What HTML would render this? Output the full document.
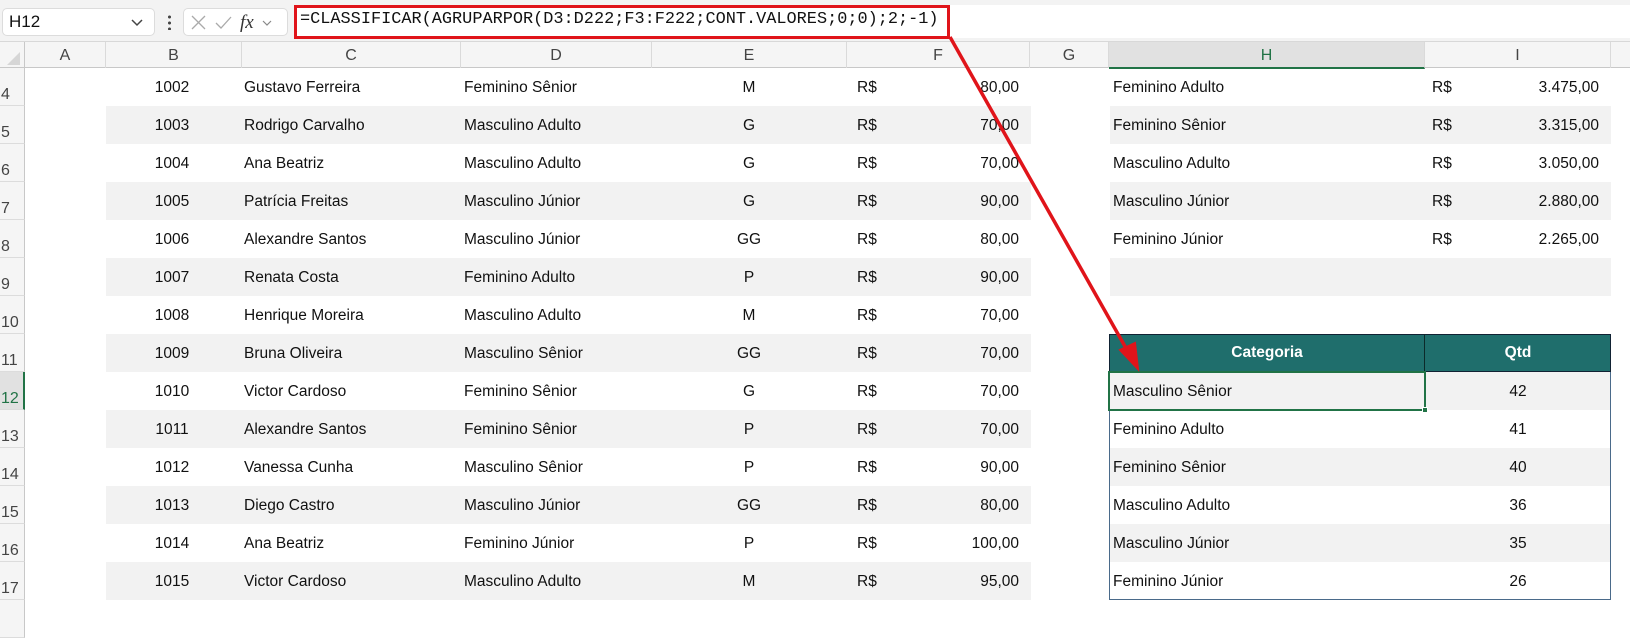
<!DOCTYPE html>
<html><head><meta charset="utf-8"><style>
*{margin:0;padding:0;box-sizing:border-box}
body{width:1630px;height:607px;overflow:hidden;background:#fff;font-family:"Liberation Sans",sans-serif;font-size:15.5px;color:#111;position:relative}
.a{position:absolute}
.top{left:0;top:0;width:1630px;height:42px;background:#f3f3f3;border-bottom:1px solid #d8d8d8}
.box{background:#fff;border:1px solid #dcdcdc;border-radius:5px}
.colh{top:42px;height:26px;background:#f5f5f5;border-bottom:1px solid #c8c8c8;left:0;width:1630px}
.ch{top:42px;height:26px;line-height:28px;text-align:center;color:#444;font-size:16px;border-right:1px solid #dadada}
.rh{left:0;width:25px;height:38px;background:#f5f5f5;border-right:1px solid #c8c8c8;border-bottom:1px solid #dcdcdc;color:#444;font-size:16px;padding:18px 0 0 1px}
.row{left:0;width:1630px;height:38px;line-height:40px}
.row span{position:absolute;white-space:nowrap}
.g1{position:absolute;left:106px;width:925px;top:0;height:38px;background:#f2f2f2}
.g2{position:absolute;left:1110px;width:501px;top:0;height:38px;background:#f2f2f2}
.b{left:152px;width:40px;text-align:center}
.c{left:244px}.d{left:464px}
.e{left:729px;width:40px;text-align:center}
.fr{left:857px}.fv{left:950px;width:69px;text-align:right}
.h{left:1113px}.ir{left:1432px}.iv{left:1500px;width:99px;text-align:right}
.q{left:1425px;width:186px;text-align:center}
</style></head><body>
<div class="a top"></div>
<div class="a box" style="left:2px;top:8px;width:153px;height:28px"></div>
<div class="a" style="left:9px;top:12px;font-size:17px">H12</div>
<svg class="a" style="left:131px;top:17px" width="12" height="10"><path d="M1 3 L6 8 L11 3" stroke="#444" stroke-width="1.5" fill="none"/></svg>
<div class="a" style="left:168px;top:14px;width:3px;height:16px;background:radial-gradient(circle,#444 1.4px,transparent 1.6px) 0 0/3px 6px"></div>
<div class="a box" style="left:183px;top:8px;width:105px;height:28px"></div>
<svg class="a" style="left:188px;top:12px" width="100" height="22"><path d="M4 4 L17 17 M17 4 L4 17" stroke="#aaa" stroke-width="1.3" fill="none"/><path d="M28 11 L33 16 L43 5" stroke="#aaa" stroke-width="1.3" fill="none"/><text x="52" y="16" font-family="Liberation Serif" font-style="italic" font-size="19" fill="#333">fx</text><path d="M75 9 L79 13 L83 9" stroke="#888" stroke-width="1.2" fill="none"/></svg>
<div class="a" style="left:295px;top:5px;width:1335px;height:33px;background:#fff"></div>
<div class="a" style="left:294px;top:5px;width:656px;height:34px;border:3px solid #e0141a"></div>
<div class="a" style="left:300px;top:10px;font-family:'Liberation Mono',monospace;font-size:16.9px;color:#111">=CLASSIFICAR(AGRUPARPOR(D3:D222;F3:F222;CONT.VALORES;0;0);2;-1)</div>

<div class="a colh"></div>
<div class="a" style="left:0;top:42px;width:25px;height:26px;border-right:1px solid #c8c8c8"><svg width="24" height="26"><path d="M20 10 L20 23 L7 23 Z" fill="#d6d6d6"/></svg></div>
<div class="a ch" style="left:25px;width:81px">A</div>
<div class="a ch" style="left:106px;width:136px">B</div>
<div class="a ch" style="left:242px;width:219px">C</div>
<div class="a ch" style="left:461px;width:191px">D</div>
<div class="a ch" style="left:652px;width:195px">E</div>
<div class="a ch" style="left:847px;width:183px">F</div>
<div class="a ch" style="left:1030px;width:79px">G</div>
<div class="a ch" style="left:1109px;width:316px;background:#e1e1e1;color:#217346;border-bottom:2px solid #217346;height:27px">H</div>
<div class="a ch" style="left:1425px;width:186px">I</div>

<div class="a rh" style="top:68px">4</div>
<div class="a rh" style="top:106px">5</div>
<div class="a rh" style="top:144px">6</div>
<div class="a rh" style="top:182px">7</div>
<div class="a rh" style="top:220px">8</div>
<div class="a rh" style="top:258px">9</div>
<div class="a rh" style="top:296px">10</div>
<div class="a rh" style="top:334px">11</div>
<div class="a rh" style="top:372px;background:#e1e1e1;color:#217346;border-right:2px solid #217346">12</div>
<div class="a rh" style="top:410px">13</div>
<div class="a rh" style="top:448px">14</div>
<div class="a rh" style="top:486px">15</div>
<div class="a rh" style="top:524px">16</div>
<div class="a rh" style="top:562px">17</div>
<div class="a rh" style="top:600px"></div>

<div class="a row" style="top:68px"><span class="b">1002</span><span class="c">Gustavo Ferreira</span><span class="d">Feminino Sênior</span><span class="e">M</span><span class="fr">R$</span><span class="fv">80,00</span><span class="h">Feminino Adulto</span><span class="ir">R$</span><span class="iv">3.475,00</span></div>
<div class="a row" style="top:106px"><i class="g1"></i><i class="g2"></i><span class="b">1003</span><span class="c">Rodrigo Carvalho</span><span class="d">Masculino Adulto</span><span class="e">G</span><span class="fr">R$</span><span class="fv">70,00</span><span class="h">Feminino Sênior</span><span class="ir">R$</span><span class="iv">3.315,00</span></div>
<div class="a row" style="top:144px"><span class="b">1004</span><span class="c">Ana Beatriz</span><span class="d">Masculino Adulto</span><span class="e">G</span><span class="fr">R$</span><span class="fv">70,00</span><span class="h">Masculino Adulto</span><span class="ir">R$</span><span class="iv">3.050,00</span></div>
<div class="a row" style="top:182px"><i class="g1"></i><i class="g2"></i><span class="b">1005</span><span class="c">Patrícia Freitas</span><span class="d">Masculino Júnior</span><span class="e">G</span><span class="fr">R$</span><span class="fv">90,00</span><span class="h">Masculino Júnior</span><span class="ir">R$</span><span class="iv">2.880,00</span></div>
<div class="a row" style="top:220px"><span class="b">1006</span><span class="c">Alexandre Santos</span><span class="d">Masculino Júnior</span><span class="e">GG</span><span class="fr">R$</span><span class="fv">80,00</span><span class="h">Feminino Júnior</span><span class="ir">R$</span><span class="iv">2.265,00</span></div>
<div class="a row" style="top:258px"><i class="g1"></i><i class="g2"></i><span class="b">1007</span><span class="c">Renata Costa</span><span class="d">Feminino Adulto</span><span class="e">P</span><span class="fr">R$</span><span class="fv">90,00</span></div>
<div class="a row" style="top:296px"><span class="b">1008</span><span class="c">Henrique Moreira</span><span class="d">Masculino Adulto</span><span class="e">M</span><span class="fr">R$</span><span class="fv">70,00</span></div>
<div class="a row" style="top:334px"><i class="g1"></i><span class="b">1009</span><span class="c">Bruna Oliveira</span><span class="d">Masculino Sênior</span><span class="e">GG</span><span class="fr">R$</span><span class="fv">70,00</span></div>
<div class="a row" style="top:372px"><span class="b">1010</span><span class="c">Victor Cardoso</span><span class="d">Feminino Sênior</span><span class="e">G</span><span class="fr">R$</span><span class="fv">70,00</span></div>
<div class="a row" style="top:410px"><i class="g1"></i><span class="b">1011</span><span class="c">Alexandre Santos</span><span class="d">Feminino Sênior</span><span class="e">P</span><span class="fr">R$</span><span class="fv">70,00</span></div>
<div class="a row" style="top:448px"><span class="b">1012</span><span class="c">Vanessa Cunha</span><span class="d">Masculino Sênior</span><span class="e">P</span><span class="fr">R$</span><span class="fv">90,00</span></div>
<div class="a row" style="top:486px"><i class="g1"></i><span class="b">1013</span><span class="c">Diego Castro</span><span class="d">Masculino Júnior</span><span class="e">GG</span><span class="fr">R$</span><span class="fv">80,00</span></div>
<div class="a row" style="top:524px"><span class="b">1014</span><span class="c">Ana Beatriz</span><span class="d">Feminino Júnior</span><span class="e">P</span><span class="fr">R$</span><span class="fv">100,00</span></div>
<div class="a row" style="top:562px"><i class="g1"></i><span class="b">1015</span><span class="c">Victor Cardoso</span><span class="d">Masculino Adulto</span><span class="e">M</span><span class="fr">R$</span><span class="fv">95,00</span></div>

<div class="a" style="left:1109px;top:334px;width:502px;height:38px;background:#1f6e6c;border:1px solid #123"></div>
<div class="a" style="left:1424px;top:334px;width:1px;height:38px;background:#0c2a2a"></div>
<div class="a" style="left:1109px;top:334px;width:316px;line-height:38px;text-align:center;color:#fff;font-weight:bold">Categoria</div>
<div class="a" style="left:1425px;top:334px;width:186px;line-height:38px;text-align:center;color:#fff;font-weight:bold">Qtd</div>
<div class="a" style="left:1109px;top:372px;width:502px;height:228px;border:1px solid #4a6a8a;border-top:none"></div>
<div class="a row" style="top:372px"><i class="g2" style="left:1110px;width:500px"></i><span class="h">Masculino Sênior</span><span class="q">42</span></div>
<div class="a row" style="top:410px"><span class="h">Feminino Adulto</span><span class="q">41</span></div>
<div class="a row" style="top:448px"><i class="g2" style="left:1110px;width:500px"></i><span class="h">Feminino Sênior</span><span class="q">40</span></div>
<div class="a row" style="top:486px"><span class="h">Masculino Adulto</span><span class="q">36</span></div>
<div class="a row" style="top:524px"><i class="g2" style="left:1110px;width:500px"></i><span class="h">Masculino Júnior</span><span class="q">35</span></div>
<div class="a row" style="top:562px"><span class="h">Feminino Júnior</span><span class="q">26</span></div>
<div class="a" style="left:1108px;top:371px;width:318px;height:40px;border:2px solid #217346"></div>
<div class="a" style="left:1422px;top:407px;width:6px;height:6px;background:#217346;border:1px solid #fff"></div>

<svg class="a" style="left:0;top:0" width="1630" height="607"><path d="M950 37 L1131 357" stroke="#e0141a" stroke-width="3.5" fill="none"/><path d="M1138 369 L1120 350 L1135 343 Z" fill="#e0141a" stroke="#e0141a" stroke-width="2"/></svg>
</body></html>
